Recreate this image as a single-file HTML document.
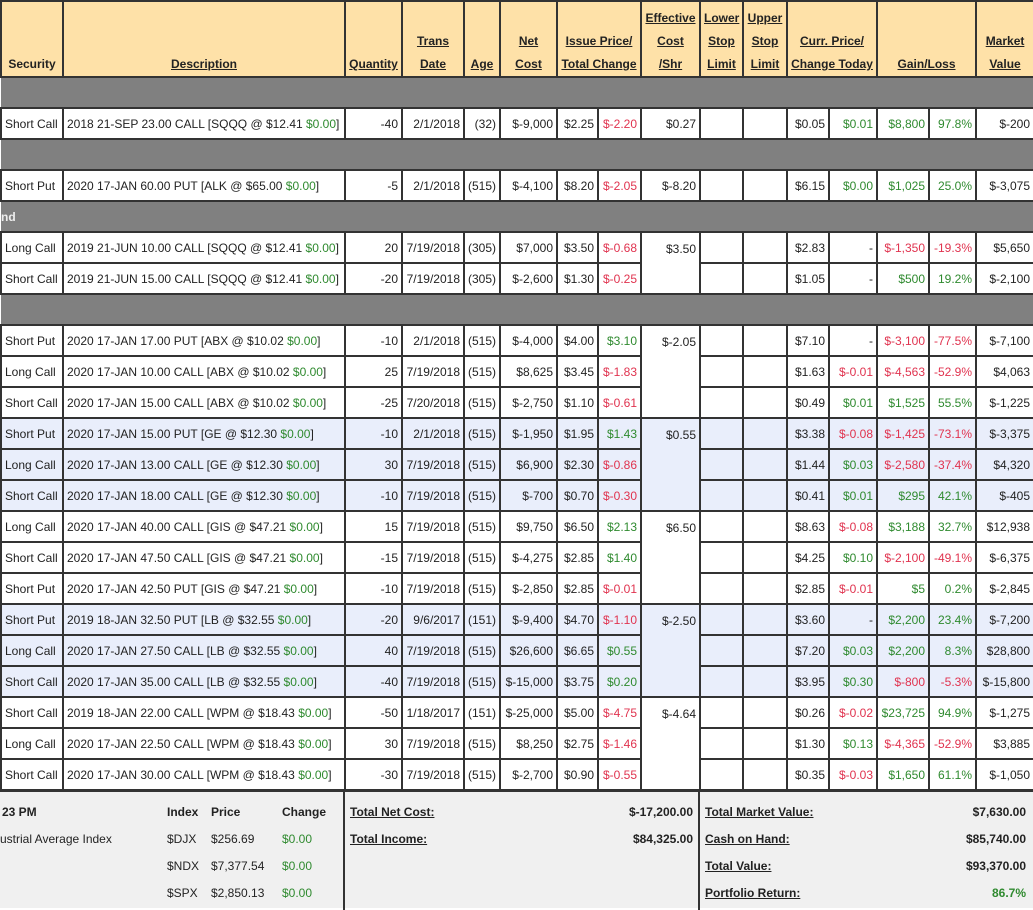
<!DOCTYPE html>
<html><head><meta charset="utf-8">
<style>
body{margin:0;background:#fff;font-family:"Liberation Sans",Arial,sans-serif;font-size:12px;color:#222;width:1033px;height:908px;overflow:hidden;position:relative}
table{border-collapse:collapse;table-layout:fixed;width:1033px;position:absolute;left:0;top:0}
td,th{border:2px solid #333;padding:0 3px;height:29px;white-space:nowrap;overflow:hidden;text-align:right;font-weight:normal}
th{background:#fee1a8;height:74px;vertical-align:bottom;text-align:center;font-weight:bold;line-height:23px;padding-bottom:0}
th u{font-weight:bold}
td.l{text-align:left}
tr.g td{background:#808080;border-left:none;border-right:none;color:#eee;font-weight:bold;text-align:left;padding-left:0}
tr.b td{background:#e9eefb}
.gr{color:#2f8a2f}.rd{color:#e0334f}
td.rs{vertical-align:top;padding-top:9px}
.foot{position:absolute;top:790px;left:0;width:1033px;height:118px;background:#f0f0f0;border-top:2px solid #333;box-sizing:border-box}
.foot div{position:absolute;font-size:12px}
.vl{position:absolute;top:0;width:2px;height:118px;background:#333}
.b{font-weight:bold}
</style></head><body>
<table>
<colgroup><col style="width:62px"><col style="width:282px"><col style="width:57px"><col style="width:62px"><col style="width:36px"><col style="width:57px"><col style="width:41px"><col style="width:43px"><col style="width:59px"><col style="width:43px"><col style="width:44px"><col style="width:42px"><col style="width:48px"><col style="width:52px"><col style="width:47px"><col style="width:58px"></colgroup>
<tr><th>Security</th><th><u>Description</u></th><th><u>Quantity</u></th><th><u>Trans</u><br><u>Date</u></th><th><u>Age</u></th><th><u>Net</u><br><u>Cost</u></th><th colspan="2"><u>Issue Price/</u><br><u>Total Change</u></th><th><u>Effective</u><br><u>Cost</u><br><u>/Shr</u></th><th><u>Lower</u><br><u>Stop</u><br><u>Limit</u></th><th><u>Upper</u><br><u>Stop</u><br><u>Limit</u></th><th colspan="2"><u>Curr. Price/</u><br><u>Change Today</u></th><th colspan="2"><u>Gain/Loss</u></th><th><u>Market</u><br><u>Value</u></th></tr>
<tr class="g"><td colspan="16"></td></tr>
<tr><td class="l">Short Call</td><td class="l">2018 21-SEP 23.00 CALL [SQQQ @ $12.41 <span class="gr">$0.00</span>]</td><td>-40</td><td>2/1/2018</td><td>(32)</td><td>$-9,000</td><td>$2.25</td><td class="rd">$-2.20</td><td>$0.27</td><td></td><td></td><td>$0.05</td><td class="gr">$0.01</td><td class="gr">$8,800</td><td class="gr">97.8%</td><td>$-200</td></tr>
<tr class="g"><td colspan="16"></td></tr>
<tr><td class="l">Short Put</td><td class="l">2020 17-JAN 60.00 PUT [ALK @ $65.00 <span class="gr">$0.00</span>]</td><td>-5</td><td>2/1/2018</td><td>(515)</td><td>$-4,100</td><td>$8.20</td><td class="rd">$-2.05</td><td>$-8.20</td><td></td><td></td><td>$6.15</td><td class="gr">$0.00</td><td class="gr">$1,025</td><td class="gr">25.0%</td><td>$-3,075</td></tr>
<tr class="g"><td colspan="16">nd</td></tr>
<tr><td class="l">Long Call</td><td class="l">2019 21-JUN 10.00 CALL [SQQQ @ $12.41 <span class="gr">$0.00</span>]</td><td>20</td><td>7/19/2018</td><td>(305)</td><td>$7,000</td><td>$3.50</td><td class="rd">$-0.68</td><td class="rs" rowspan="2">$3.50</td><td></td><td></td><td>$2.83</td><td>-</td><td class="rd">$-1,350</td><td class="rd">-19.3%</td><td>$5,650</td></tr>
<tr><td class="l">Short Call</td><td class="l">2019 21-JUN 15.00 CALL [SQQQ @ $12.41 <span class="gr">$0.00</span>]</td><td>-20</td><td>7/19/2018</td><td>(305)</td><td>$-2,600</td><td>$1.30</td><td class="rd">$-0.25</td><td></td><td></td><td>$1.05</td><td>-</td><td class="gr">$500</td><td class="gr">19.2%</td><td>$-2,100</td></tr>
<tr class="g"><td colspan="16"></td></tr>
<tr><td class="l">Short Put</td><td class="l">2020 17-JAN 17.00 PUT [ABX @ $10.02 <span class="gr">$0.00</span>]</td><td>-10</td><td>2/1/2018</td><td>(515)</td><td>$-4,000</td><td>$4.00</td><td class="gr">$3.10</td><td class="rs" rowspan="3">$-2.05</td><td></td><td></td><td>$7.10</td><td>-</td><td class="rd">$-3,100</td><td class="rd">-77.5%</td><td>$-7,100</td></tr>
<tr><td class="l">Long Call</td><td class="l">2020 17-JAN 10.00 CALL [ABX @ $10.02 <span class="gr">$0.00</span>]</td><td>25</td><td>7/19/2018</td><td>(515)</td><td>$8,625</td><td>$3.45</td><td class="rd">$-1.83</td><td></td><td></td><td>$1.63</td><td class="rd">$-0.01</td><td class="rd">$-4,563</td><td class="rd">-52.9%</td><td>$4,063</td></tr>
<tr><td class="l">Short Call</td><td class="l">2020 17-JAN 15.00 CALL [ABX @ $10.02 <span class="gr">$0.00</span>]</td><td>-25</td><td>7/20/2018</td><td>(515)</td><td>$-2,750</td><td>$1.10</td><td class="rd">$-0.61</td><td></td><td></td><td>$0.49</td><td class="gr">$0.01</td><td class="gr">$1,525</td><td class="gr">55.5%</td><td>$-1,225</td></tr>
<tr class="b"><td class="l">Short Put</td><td class="l">2020 17-JAN 15.00 PUT [GE @ $12.30 <span class="gr">$0.00</span>]</td><td>-10</td><td>2/1/2018</td><td>(515)</td><td>$-1,950</td><td>$1.95</td><td class="gr">$1.43</td><td class="rs" rowspan="3">$0.55</td><td></td><td></td><td>$3.38</td><td class="rd">$-0.08</td><td class="rd">$-1,425</td><td class="rd">-73.1%</td><td>$-3,375</td></tr>
<tr class="b"><td class="l">Long Call</td><td class="l">2020 17-JAN 13.00 CALL [GE @ $12.30 <span class="gr">$0.00</span>]</td><td>30</td><td>7/19/2018</td><td>(515)</td><td>$6,900</td><td>$2.30</td><td class="rd">$-0.86</td><td></td><td></td><td>$1.44</td><td class="gr">$0.03</td><td class="rd">$-2,580</td><td class="rd">-37.4%</td><td>$4,320</td></tr>
<tr class="b"><td class="l">Short Call</td><td class="l">2020 17-JAN 18.00 CALL [GE @ $12.30 <span class="gr">$0.00</span>]</td><td>-10</td><td>7/19/2018</td><td>(515)</td><td>$-700</td><td>$0.70</td><td class="rd">$-0.30</td><td></td><td></td><td>$0.41</td><td class="gr">$0.01</td><td class="gr">$295</td><td class="gr">42.1%</td><td>$-405</td></tr>
<tr><td class="l">Long Call</td><td class="l">2020 17-JAN 40.00 CALL [GIS @ $47.21 <span class="gr">$0.00</span>]</td><td>15</td><td>7/19/2018</td><td>(515)</td><td>$9,750</td><td>$6.50</td><td class="gr">$2.13</td><td class="rs" rowspan="3">$6.50</td><td></td><td></td><td>$8.63</td><td class="rd">$-0.08</td><td class="gr">$3,188</td><td class="gr">32.7%</td><td>$12,938</td></tr>
<tr><td class="l">Short Call</td><td class="l">2020 17-JAN 47.50 CALL [GIS @ $47.21 <span class="gr">$0.00</span>]</td><td>-15</td><td>7/19/2018</td><td>(515)</td><td>$-4,275</td><td>$2.85</td><td class="gr">$1.40</td><td></td><td></td><td>$4.25</td><td class="gr">$0.10</td><td class="rd">$-2,100</td><td class="rd">-49.1%</td><td>$-6,375</td></tr>
<tr><td class="l">Short Put</td><td class="l">2020 17-JAN 42.50 PUT [GIS @ $47.21 <span class="gr">$0.00</span>]</td><td>-10</td><td>7/19/2018</td><td>(515)</td><td>$-2,850</td><td>$2.85</td><td class="rd">$-0.01</td><td></td><td></td><td>$2.85</td><td class="rd">$-0.01</td><td class="gr">$5</td><td class="gr">0.2%</td><td>$-2,845</td></tr>
<tr class="b"><td class="l">Short Put</td><td class="l">2019 18-JAN 32.50 PUT [LB @ $32.55 <span class="gr">$0.00</span>]</td><td>-20</td><td>9/6/2017</td><td>(151)</td><td>$-9,400</td><td>$4.70</td><td class="rd">$-1.10</td><td class="rs" rowspan="3">$-2.50</td><td></td><td></td><td>$3.60</td><td>-</td><td class="gr">$2,200</td><td class="gr">23.4%</td><td>$-7,200</td></tr>
<tr class="b"><td class="l">Long Call</td><td class="l">2020 17-JAN 27.50 CALL [LB @ $32.55 <span class="gr">$0.00</span>]</td><td>40</td><td>7/19/2018</td><td>(515)</td><td>$26,600</td><td>$6.65</td><td class="gr">$0.55</td><td></td><td></td><td>$7.20</td><td class="gr">$0.03</td><td class="gr">$2,200</td><td class="gr">8.3%</td><td>$28,800</td></tr>
<tr class="b"><td class="l">Short Call</td><td class="l">2020 17-JAN 35.00 CALL [LB @ $32.55 <span class="gr">$0.00</span>]</td><td>-40</td><td>7/19/2018</td><td>(515)</td><td>$-15,000</td><td>$3.75</td><td class="gr">$0.20</td><td></td><td></td><td>$3.95</td><td class="gr">$0.30</td><td class="rd">$-800</td><td class="rd">-5.3%</td><td>$-15,800</td></tr>
<tr><td class="l">Short Call</td><td class="l">2019 18-JAN 22.00 CALL [WPM @ $18.43 <span class="gr">$0.00</span>]</td><td>-50</td><td>1/18/2017</td><td>(151)</td><td>$-25,000</td><td>$5.00</td><td class="rd">$-4.75</td><td class="rs" rowspan="3">$-4.64</td><td></td><td></td><td>$0.26</td><td class="rd">$-0.02</td><td class="gr">$23,725</td><td class="gr">94.9%</td><td>$-1,275</td></tr>
<tr><td class="l">Long Call</td><td class="l">2020 17-JAN 22.50 CALL [WPM @ $18.43 <span class="gr">$0.00</span>]</td><td>30</td><td>7/19/2018</td><td>(515)</td><td>$8,250</td><td>$2.75</td><td class="rd">$-1.46</td><td></td><td></td><td>$1.30</td><td class="gr">$0.13</td><td class="rd">$-4,365</td><td class="rd">-52.9%</td><td>$3,885</td></tr>
<tr><td class="l">Short Call</td><td class="l">2020 17-JAN 30.00 CALL [WPM @ $18.43 <span class="gr">$0.00</span>]</td><td>-30</td><td>7/19/2018</td><td>(515)</td><td>$-2,700</td><td>$0.90</td><td class="rd">$-0.55</td><td></td><td></td><td>$0.35</td><td class="rd">$-0.03</td><td class="gr">$1,650</td><td class="gr">61.1%</td><td>$-1,050</td></tr>
</table>
<div class="foot">
<div class="vl" style="left:343px"></div><div class="vl" style="left:698px"></div>
<div class="b" style="left:2px;top:13px">23 PM</div>
<div style="left:0;top:40px">ustrial Average Index</div>
<div class="b" style="left:167px;top:13px">Index</div><div class="b" style="left:211px;top:13px">Price</div><div class="b" style="left:282px;top:13px">Change</div>
<div style="left:167px;top:40px">$DJX</div><div style="left:211px;top:40px">$256.69</div><div class="gr" style="left:282px;top:40px">$0.00</div>
<div style="left:167px;top:67px">$NDX</div><div style="left:211px;top:67px">$7,377.54</div><div class="gr" style="left:282px;top:67px">$0.00</div>
<div style="left:167px;top:94px">$SPX</div><div style="left:211px;top:94px">$2,850.13</div><div class="gr" style="left:282px;top:94px">$0.00</div>
<div class="b" style="left:350px;top:13px"><u>Total Net Cost: </u></div><div class="b" style="right:340px;top:13px">$-17,200.00</div>
<div class="b" style="left:350px;top:40px"><u>Total Income: </u></div><div class="b" style="right:340px;top:40px">$84,325.00</div>
<div class="b" style="left:705px;top:13px"><u>Total Market Value: </u></div><div class="b" style="right:7px;top:13px">$7,630.00</div>
<div class="b" style="left:705px;top:40px"><u>Cash on Hand: </u></div><div class="b" style="right:7px;top:40px">$85,740.00</div>
<div class="b" style="left:705px;top:67px"><u>Total Value: </u></div><div class="b" style="right:7px;top:67px">$93,370.00</div>
<div class="b" style="left:705px;top:94px"><u>Portfolio Return: </u></div><div class="b gr" style="right:7px;top:94px">86.7%</div>
</div>
</body></html>
